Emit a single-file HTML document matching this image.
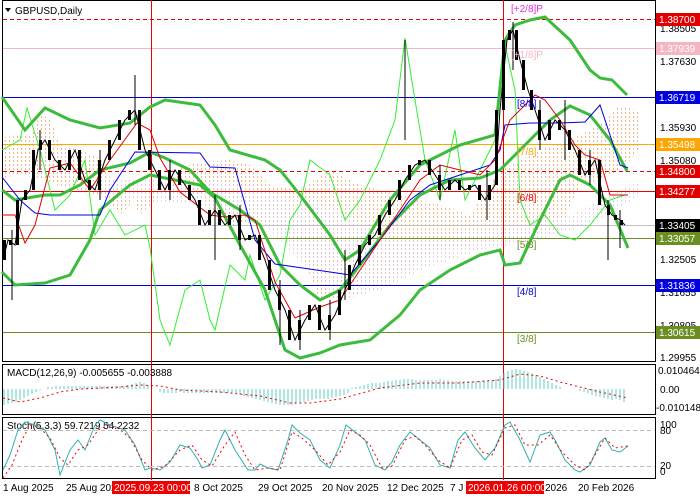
<!DOCTYPE html>
<html><head><meta charset="utf-8"><style>
html,body{margin:0;padding:0;background:#fff;}
svg{display:block;font-family:"Liberation Sans",sans-serif;}
</style></head><body>
<svg width="700" height="500" viewBox="0 0 700 500" xmlns="http://www.w3.org/2000/svg">
<defs>
<pattern id="dotO" width="4" height="4" patternUnits="userSpaceOnUse"><rect x="1" y="0" width="1" height="2" fill="#f0a060"/></pattern>
<pattern id="dotG" width="4" height="4" patternUnits="userSpaceOnUse"><rect x="1" y="0" width="1" height="2" fill="#d8c8d8"/></pattern>
</defs>
<rect width="700" height="500" fill="#fff"/>
<rect x="2.5" y="0.5" width="653" height="361" fill="none" stroke="#000"/>
<rect x="2.5" y="364.5" width="653" height="50" fill="none" stroke="#000"/>
<rect x="2.5" y="417.5" width="653" height="61" fill="none" stroke="#000"/>

<polygon points="2,137 30,135 40,115 50,118 60,145 80,150 100,158 110,178 130,195 140,215 160,195 180,168 200,162 230,160 250,165 270,185 300,190 330,170 360,185 400,195 440,205 470,215 490,185 500,170 520,160 540,150 570,140 600,125 615,108 630,108 640,112 640,150 620,170 600,180 580,185 560,230 540,235 520,240 500,240 470,245 440,250 420,260 390,280 370,290 340,300 320,300 300,250 280,230 250,220 230,230 200,200 170,185 140,195 120,215 100,195 70,190 40,178 20,175 2,178" fill="url(#dotO)" opacity="0.75"/>
<polygon points="90,178 140,178 180,185 220,180 260,190 300,200 340,210 370,230 400,240 440,240 470,230 500,225 560,220 600,200 640,180 640,195 600,220 540,240 480,250 420,270 380,290 340,300 300,260 260,220 200,205 140,200 100,195" fill="url(#dotG)" opacity="0.8"/>

<line x1="3" y1="19.5" x2="655" y2="19.5" stroke="#e00" stroke-dasharray="4,3"/>
<line x1="3" y1="48.5" x2="655" y2="48.5" stroke="#f4b6c2"/>
<line x1="3" y1="97.5" x2="655" y2="97.5" stroke="#0000d0"/>
<line x1="3" y1="144.5" x2="655" y2="144.5" stroke="#ffa500"/>
<line x1="3" y1="171.5" x2="655" y2="171.5" stroke="#e00" stroke-dasharray="4,3"/>
<line x1="3" y1="191.5" x2="655" y2="191.5" stroke="#e00"/>
<line x1="3" y1="225.5" x2="655" y2="225.5" stroke="#c0c0c0"/>
<line x1="3" y1="238.5" x2="655" y2="238.5" stroke="#6b8e23"/>
<line x1="3" y1="285.5" x2="655" y2="285.5" stroke="#0000d0"/>
<line x1="3" y1="332.5" x2="655" y2="332.5" stroke="#6b8e23"/>

<line x1="151.5" y1="0" x2="151.5" y2="480" stroke="#e00"/>
<line x1="503.5" y1="0" x2="503.5" y2="480" stroke="#e00"/>

<polyline fill="none" stroke="#33ee33" stroke-width="1" points="2,150 20,140 27,108 40,150 55,210 70,195 85,160 95,235 110,210 125,235 145,225 150,248 160,320 170,345 185,290 200,280 210,320 215,330 230,265 245,280 250,255 265,300 280,275 290,220 300,205 310,160 330,175 345,220 360,200 380,160 395,120 405,38 415,100 425,160 440,200 455,130 465,200 480,170 495,140 505,45 515,90 520,200 530,225 545,215 560,235 575,240 590,225 610,200 625,195"/>

<g fill="none" stroke="#3cbb3c" stroke-width="3">
<polyline points="2,97 25,130 45,108 70,120 100,128 130,123 150,107 165,100 200,105 215,125 230,150 265,160 280,170 300,195 330,235 345,260 360,250 390,200 420,165 460,145 495,135 505,40 515,25 530,20 545,17 570,40 590,70 600,78 612,80 627,95"/>
<polyline points="2,190 15,200 45,195 60,195 80,185 100,170 130,163 150,152 165,158 190,170 210,192 240,210 260,225 280,265 300,285 320,300 340,290 360,265 390,225 420,195 450,180 480,178 500,170 530,140 550,120 570,106 590,115 610,140 627,171"/>
<polyline points="2,272 15,285 45,283 70,275 90,240 100,210 130,185 150,175 200,185 215,198 240,245 265,290 285,350 300,358 320,353 340,345 370,340 400,315 420,290 450,270 480,255 500,250 505,265 520,263 540,220 560,180 570,175 590,185 610,205 628,248"/>
</g>

<polyline fill="none" stroke="#0000e0" points="2,177 20,200 35,213 50,215 100,215 110,190 135,152 200,153 210,167 235,168 255,240 275,264 330,272 350,275 380,240 410,200 430,185 460,175 490,165 500,150 505,125 530,123 560,123 585,122 600,105 610,135 620,165 628,168"/>
<polyline fill="none" stroke="#e00000" points="2,215 15,215 25,243 35,225 50,168 70,163 90,190 110,160 137,123 150,130 160,158 180,192 210,215 225,217 245,215 255,220 275,282 295,318 320,307 340,300 360,270 380,240 400,210 420,180 440,165 460,170 480,175 495,160 510,120 520,110 535,95 545,100 560,120 575,145 585,155 600,160 610,195 628,195"/>

<g stroke="#000">
<polyline fill="none" stroke-width="1" points="3,260 8,240 15,245 22,200 30,190 38,150 45,140 55,160 65,170 75,150 85,180 95,190 105,160 115,140 125,120 135,110 145,150 155,170 165,190 175,170 185,185 195,200 205,225 215,210 225,225 235,215 245,240 255,235 265,260 275,290 285,310 295,340 305,320 315,305 325,330 335,315 345,290 355,265 365,245 375,235 385,215 395,200 405,180 415,165 425,160 435,175 445,190 455,180 465,190 475,185 485,200 495,185 500,110 507,40 513,30 520,60 528,90 535,110 545,140 555,120 565,130 575,150 585,175 595,160 605,205 612,215 620,220 625,225"/>
<path d="M135,75V125 M405,40V140 M513,22V70 M608,200V260 M620,210V248 M345,250V300 M280,280V345 M12,230V300 M215,195V260 M487,170V220 M565,100V160 M40,130V170 M100,150V200 M170,160V200 M240,205V250 M300,310V350 M330,300V340 M440,165V200 M540,100V150 M590,150V185" stroke-width="1"/>
</g>
<g fill="#000">
<rect x="3" y="240" width="3" height="20"/><rect x="9" y="240" width="3" height="5"/><rect x="16" y="200" width="3" height="45"/><rect x="24" y="190" width="3" height="10"/><rect x="32" y="150" width="3" height="40"/><rect x="39" y="140" width="3" height="10"/><rect x="48" y="140" width="3" height="20"/><rect x="58" y="160" width="3" height="10"/><rect x="68" y="150" width="3" height="20"/><rect x="78" y="150" width="3" height="30"/><rect x="88" y="180" width="3" height="10"/><rect x="98" y="160" width="3" height="30"/><rect x="108" y="140" width="3" height="20"/><rect x="118" y="120" width="3" height="20"/><rect x="128" y="110" width="3" height="10"/><rect x="138" y="110" width="3" height="40"/><rect x="148" y="150" width="3" height="20"/><rect x="158" y="170" width="3" height="20"/><rect x="168" y="170" width="3" height="20"/><rect x="178" y="170" width="3" height="15"/><rect x="188" y="185" width="3" height="15"/><rect x="198" y="200" width="3" height="25"/><rect x="208" y="210" width="3" height="15"/><rect x="218" y="210" width="3" height="15"/><rect x="228" y="215" width="3" height="10"/><rect x="238" y="215" width="3" height="25"/><rect x="248" y="235" width="3" height="5"/><rect x="258" y="235" width="3" height="25"/><rect x="268" y="260" width="3" height="30"/><rect x="278" y="290" width="3" height="20"/><rect x="288" y="310" width="3" height="30"/><rect x="298" y="320" width="3" height="20"/><rect x="308" y="305" width="3" height="15"/><rect x="318" y="305" width="3" height="25"/><rect x="328" y="315" width="3" height="15"/><rect x="338" y="290" width="3" height="25"/><rect x="348" y="265" width="3" height="25"/><rect x="358" y="245" width="3" height="20"/><rect x="368" y="235" width="3" height="10"/><rect x="378" y="215" width="3" height="20"/><rect x="388" y="200" width="3" height="15"/><rect x="398" y="180" width="3" height="20"/><rect x="408" y="165" width="3" height="15"/><rect x="418" y="160" width="3" height="5"/><rect x="428" y="160" width="3" height="15"/><rect x="438" y="175" width="3" height="15"/><rect x="448" y="180" width="3" height="10"/><rect x="458" y="180" width="3" height="10"/><rect x="468" y="185" width="3" height="5"/><rect x="478" y="185" width="3" height="15"/><rect x="488" y="185" width="3" height="15"/><rect x="495" y="110" width="3" height="75"/><rect x="502" y="40" width="3" height="70"/><rect x="508" y="30" width="3" height="10"/><rect x="515" y="30" width="3" height="30"/><rect x="522" y="60" width="3" height="30"/><rect x="530" y="90" width="3" height="20"/><rect x="538" y="110" width="3" height="30"/><rect x="548" y="120" width="3" height="20"/><rect x="558" y="120" width="3" height="10"/><rect x="568" y="130" width="3" height="20"/><rect x="578" y="150" width="3" height="25"/><rect x="588" y="160" width="3" height="15"/><rect x="598" y="160" width="3" height="45"/><rect x="607" y="205" width="3" height="10"/><rect x="614" y="215" width="3" height="5"/><rect x="620" y="220" width="3" height="5"/>
</g>

<polygon points="5,8 11,8 8,12" fill="#000"/>
<text x="15" y="14" font-size="10">GBPUSD,Daily</text>

<g font-size="10">
<text x="511" y="12" fill="#e030e0">[+2/8]P</text>
<text x="511" y="58" fill="#f4b6c2">[+1/8]P</text>
<text x="517" y="107" fill="#0000d0">[8/8]</text>
<text x="517" y="155" fill="#ffa500">[7/8]</text>
<text x="517" y="201" fill="#e00">[6/8]</text>
<text x="517" y="248" fill="#6b8e23">[5/8]</text>
<text x="517" y="295" fill="#0000d0">[4/8]</text>
<text x="517" y="342" fill="#6b8e23">[3/8]</text>
</g>

<g font-size="10" fill="#000">
<text x="660" y="32">1.38505</text>
<text x="660" y="65">1.37630</text>
<text x="660" y="131">1.35930</text>
<text x="660" y="164">1.35080</text>
<text x="660" y="263">1.32505</text>
<text x="660" y="296">1.31655</text>
<text x="660" y="329">1.30805</text>
<text x="660" y="361">1.29955</text>
<text x="658" y="374">0.010464</text>
<text x="660" y="393">0.00</text>
<text x="656" y="411">-0.010148</text>
<text x="660" y="428">100</text>
<text x="660" y="434">80</text>
<text x="660" y="469">20</text>
<text x="660" y="475">0</text>
</g>
<g font-size="10" fill="#fff">
<rect x="656" y="13" width="44" height="13" fill="#e00000"/><text x="659" y="23">1.38700</text>
<rect x="656" y="42" width="44" height="13" fill="#f4b6c2"/><text x="659" y="52">1.37939</text>
<rect x="656" y="91" width="44" height="13" fill="#0000e0"/><text x="659" y="101">1.36719</text>
<rect x="656" y="138" width="44" height="13" fill="#ffa500"/><text x="659" y="148">1.35498</text>
<rect x="656" y="165" width="44" height="13" fill="#e00000"/><text x="659" y="175">1.34800</text>
<rect x="656" y="185" width="44" height="13" fill="#e00000"/><text x="659" y="195">1.34277</text>
<rect x="656" y="219" width="44" height="13" fill="#000"/><text x="659" y="229">1.33405</text>
<rect x="656" y="232" width="44" height="13" fill="#6b8e23"/><text x="659" y="242">1.33057</text>
<rect x="656" y="279" width="44" height="13" fill="#0000e0"/><text x="659" y="289">1.31836</text>
<rect x="656" y="326" width="44" height="13" fill="#6b8e23"/><text x="659" y="336">1.30615</text>
</g>

<text x="7" y="376" font-size="10">MACD(12,26,9) -0.005655 -0.003888</text>
<g stroke="#5fd0c0" stroke-width="1">
<path d="M4,389V405 M8,389V404 M12,389V403 M16,389V402 M20,389V400 M24,389V398 M28,389V396 M32,389V394 M36,389V392 M40,389V390 M48,387V389 M52,387V389 M56,386V389 M60,386V389 M64,386V389 M68,386V389 M72,386V389 M76,386V389 M80,386V389 M84,386V389 M88,386V389 M92,386V389 M96,386V389 M100,386V389 M104,386V389 M108,386V389 M112,386V389 M116,386V389 M120,386V389 M124,386V389 M128,385V389 M132,384V389 M136,383V389 M140,382V389 M144,383V389 M148,385V389 M160,389V392 M164,389V393 M168,389V393 M172,389V393 M176,389V393 M180,389V392 M184,389V393 M188,389V393 M192,389V393 M196,389V393 M200,389V393 M204,389V393 M208,389V393 M212,389V393 M216,389V393 M220,389V393 M224,389V393 M228,389V393 M232,389V393 M236,389V393 M240,389V395 M244,389V396 M248,389V397 M252,389V398 M256,389V399 M260,389V400 M264,389V401 M268,389V402 M272,389V403 M276,389V404 M280,389V405 M284,389V405 M288,389V405 M292,389V405 M296,389V404 M300,389V403 M304,389V402 M308,389V401 M312,389V400 M316,389V399 M320,389V399 M324,389V399 M328,389V399 M332,389V398 M336,389V397 M340,389V396 M344,389V395 M348,389V393 M352,388V389 M356,387V389 M360,386V389 M364,385V389 M368,384V389 M372,383V389 M376,383V389 M380,383V389 M384,382V389 M388,381V389 M392,381V389 M396,380V389 M400,380V389 M404,379V389 M408,379V389 M412,379V389 M416,380V389 M420,380V389 M424,380V389 M428,380V389 M432,380V389 M436,380V389 M440,379V389 M444,380V389 M448,380V389 M452,381V389 M456,381V389 M460,381V389 M464,381V389 M468,381V389 M472,381V389 M476,381V389 M480,381V389 M484,380V389 M488,380V389 M492,380V389 M496,379V389 M500,376V389 M504,373V389 M508,371V389 M512,370V389 M516,369V389 M520,370V389 M524,371V389 M528,372V389 M532,373V389 M536,375V389 M540,377V389 M544,379V389 M548,381V389 M552,383V389 M556,385V389 M560,387V389 M580,389V391 M584,389V392 M588,389V393 M592,389V395 M596,389V396 M600,389V397 M604,389V398 M608,389V399 M612,389V400 M616,389V399 M620,389V400 M624,389V402"/>
</g>
<polyline fill="none" stroke="#e00" stroke-dasharray="2,3" points="3,398 20,402 40,398 60,392 80,389 100,388 120,387 140,385 160,386 180,390 220,392 260,396 290,403 310,403 340,399 380,388 420,383 460,383 500,380 520,374 540,376 560,382 580,387 600,392 628,398"/>

<text x="7" y="429" font-size="10">Stoch(5,3,3) 59.7219 54.2232</text>
<line x1="3" y1="430.5" x2="655" y2="430.5" stroke="#bbb" stroke-dasharray="4,3"/>
<line x1="3" y1="466.5" x2="655" y2="466.5" stroke="#bbb" stroke-dasharray="4,3"/>
<polyline fill="none" stroke="#30b0b0" points="3,470 10,455 18,430 25,422 35,425 45,430 55,450 60,475 70,450 78,440 85,450 95,425 100,420 110,425 125,430 135,445 145,470 150,468 160,470 170,462 180,445 190,448 198,460 202,468 210,465 220,440 225,430 235,450 248,470 255,470 260,464 268,468 278,470 288,440 292,425 300,433 310,440 320,460 330,468 340,445 346,425 355,432 365,440 375,465 385,470 392,462 400,445 410,432 420,440 430,448 440,465 450,468 458,440 465,432 475,448 485,460 495,448 505,425 510,422 520,440 530,462 540,435 550,432 555,440 565,460 575,470 580,472 590,465 600,442 605,438 612,450 620,452 628,446"/>
<polyline fill="none" stroke="#e00" stroke-dasharray="2,3" points="3,478 12,465 22,440 30,425 40,428 50,438 60,458 68,465 78,450 88,445 98,430 108,425 118,428 130,438 142,460 152,470 165,466 180,450 192,445 202,460 212,466 225,445 235,432 245,455 255,470 268,468 280,470 292,432 302,438 315,450 328,465 340,452 350,430 360,435 370,445 382,468 392,466 405,440 415,436 425,445 438,460 450,468 462,440 472,435 482,452 492,455 505,428 515,425 525,445 538,445 550,435 562,452 575,465 585,470 595,455 605,438 615,448 628,446"/>

<g font-size="10" fill="#000">
<text x="3" y="491">1 Aug 2025</text>
<text x="66" y="491">25 Aug 202</text>
<text x="194" y="491">8 Oct 2025</text>
<text x="258" y="491">29 Oct 2025</text>
<text x="322" y="491">20 Nov 2025</text>
<text x="387" y="491">12 Dec 2025</text>
<text x="450" y="491">7 J</text>
<text x="545" y="491">2026</text>
<text x="578" y="491">20 Feb 2026</text>
</g>
<rect x="112" y="481" width="78" height="13" fill="#e00"/>
<text x="114" y="491" font-size="10" fill="#fff">2025.09.23 00:00</text>
<rect x="466" y="481" width="78" height="13" fill="#e00"/>
<text x="468" y="491" font-size="10" fill="#fff">2026.01.26 00:00</text>
</svg>
</body></html>
